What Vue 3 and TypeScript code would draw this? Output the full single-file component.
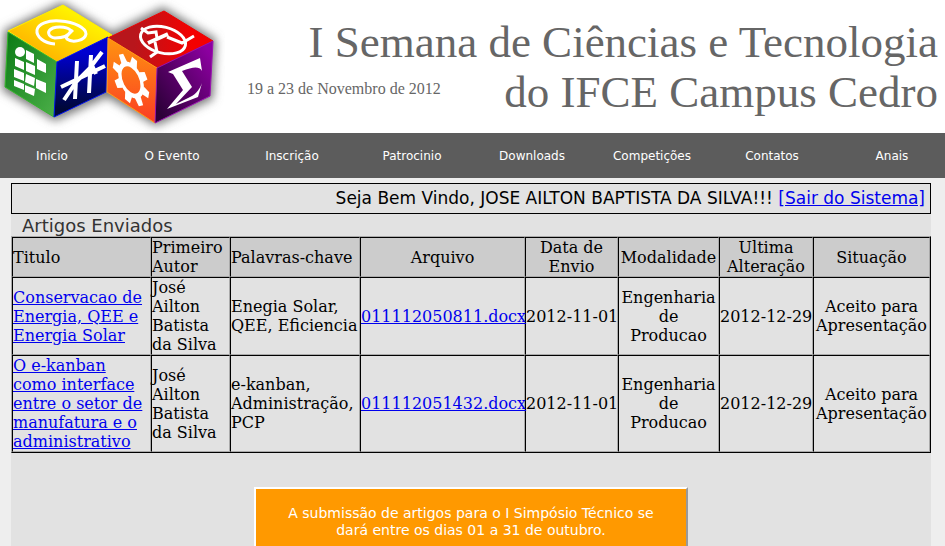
<script setup lang="ts">
interface Article {
  title: string
  author: string
  keywords: string
  file: string
  sent: string
  mode: string
  changed: string
  status: string
}

const menu: string[] = [
  'Inicio',
  'O Evento',
  'Inscrição',
  'Patrocinio',
  'Downloads',
  'Competições',
  'Contatos',
  'Anais',
]

const articles: Article[] = [
  {
    title: 'Conservacao de Energia, QEE e Energia Solar',
    author: 'José Ailton Batista da Silva',
    keywords: 'Enegia Solar, QEE, Eficiencia',
    file: '011112050811.docx',
    sent: '2012-11-01',
    mode: 'Engenharia de Producao',
    changed: '2012-12-29',
    status: 'Aceito para Apresentação',
  },
  {
    title: 'O e-kanban como interface entre o setor de manufatura e o administrativo',
    author: 'José Ailton Batista da Silva',
    keywords: 'e-kanban, Administração, PCP',
    file: '011112051432.docx',
    sent: '2012-11-01',
    mode: 'Engenharia de Producao',
    changed: '2012-12-29',
    status: 'Aceito para Apresentação',
  },
]

const gearTeeth: number[] = [10, 55, 100, 145, 190, 235, 280, 325]
</script>

<template>
  <header class="banner">
    <svg class="logo" viewBox="0 0 225 133" aria-hidden="true">
      <defs>
        <filter id="soft" x="-20%" y="-20%" width="140%" height="140%">
          <feGaussianBlur stdDeviation="5" />
        </filter>
        <linearGradient id="yellow" x1="0" y1="1" x2="1" y2="0">
          <stop offset="0.2" stop-color="#ffb400" />
          <stop offset="0.75" stop-color="#fff200" />
        </linearGradient>
        <linearGradient id="green" x1="0" y1="0" x2="1" y2="1">
          <stop offset="0" stop-color="#0a7a14" />
          <stop offset="1" stop-color="#4db04a" />
        </linearGradient>
        <linearGradient id="blue" x1="0" y1="0" x2="0" y2="1">
          <stop offset="0.2" stop-color="#0000d0" />
          <stop offset="0.9" stop-color="#000838" />
        </linearGradient>
        <linearGradient id="red" x1="0" y1="0" x2="1" y2="0">
          <stop offset="0.25" stop-color="#b8161c" />
          <stop offset="0.8" stop-color="#f40000" />
        </linearGradient>
        <linearGradient id="orange" x1="0" y1="0" x2="0" y2="1">
          <stop offset="0" stop-color="#ff9410" />
          <stop offset="1" stop-color="#fb3c24" />
        </linearGradient>
        <linearGradient id="purple" x1="0" y1="1" x2="1" y2="0">
          <stop offset="0.1" stop-color="#2c0038" />
          <stop offset="0.9" stop-color="#8c00a0" />
        </linearGradient>
      </defs>
      <path class="shade" d="M62 2 112 32 163 7 216 39 213 99 156 126 107 97 55 121 2 90 4 30Z" />
      <path fill="url(#yellow)" stroke="#fff000" d="M63 5 112 35 57 62 8 31Z" />
      <path fill="url(#green)" stroke="#35b52c" d="M8 32 57 62 54 117 5 87Z" />
      <path fill="url(#blue)" stroke="#0010f0" d="M57 62 108 37 106 92 54 117Z" />
      <path fill="url(#red)" stroke="#f00000" d="M164 11 213 41 157 68 108 38Z" />
      <path fill="url(#orange)" stroke="#ffa018" d="M108 38 157 68 155 123 107 92Z" />
      <path fill="url(#purple)" stroke="#9a10b0" d="M157 68 213 41 210 96 155 123Z" />
      <g class="line">
        <path d="M55 44C44 43 36 37 37 30 38 24 48 20 60 21 75 22 86 28 86 34 85 41 72 43 67 39 65 37 69 34 73 30M71 31C69 27 59 26 53 28 46 31 48 37 55 38 63 38 69 35 71 31" />
      </g>
      <g class="fill">
        <ellipse cx="20" cy="52" rx="5" ry="5" />
        <path d="M26 50 34 54 34 63 26 59ZM37 59 46 64 46 73 37 69ZM15 58 24 62 24 70 15 66ZM26 62 35 66 35 75 26 71ZM14 69 24 73 24 81 14 77ZM26 74 35 78 34 86 25 82ZM36 79 46 83 46 93 36 88ZM14 80 24 84 24 90 14 86ZM25 85 35 89 34 96 25 92Z" />
      </g>
      <g class="line bold">
        <path d="M77 61 75 99M91 55 89 93M102 52 90 68 76 82 64 100M61 87 82 77 105 66M91 63 96 74" />
      </g>
      <g class="line">
        <ellipse cx="163" cy="40" rx="23" ry="13" transform="rotate(14 163 40)" />
        <path d="M141 28 148 33 156 32 157 38M194 36 182 43 167 37M150 57 157 52 155 42" />
        <path class="bold" d="M148 43 168 34" />
      </g>
      <g class="fill" transform="matrix(.86 .54 -.02 1.12 131 80)">
        <path fill-rule="evenodd" d="M0-15A15 15 0 1 1 0 15 15 15 0 1 1 0-15M0-11A11 11 0 1 0 0 11 11 11 0 1 0 0-11" />
        <path v-for="angle in gearTeeth" :key="angle" d="M-4-14-3-21H3L4-14Z" :transform="`rotate(${angle})`" />
      </g>
      <path class="fill" d="M168 72 200 58 202 71C199 66 193 67 182 71L192 87 176 104 190 97C197 94 200 88 202 83L198 97 167 109 183 90 173 74Z" />
    </svg>
    <p class="dates">19 a 23 de Novembro de 2012</p>
    <h1 class="title">I Semana de Ciências e Tecnologia<br />do IFCE Campus Cedro</h1>
  </header>

  <nav class="menu">
    <ul class="menu-list">
      <li v-for="item in menu" :key="item"><a href="#">{{ item }}</a></li>
    </ul>
  </nav>

  <main class="content">
    <p class="welcome">
      Seja Bem Vindo, JOSE AILTON BAPTISTA DA SILVA!!! <a href="#">[Sair do Sistema]</a>
    </p>
    <h2 class="heading">Artigos Enviados</h2>
    <table class="articles">
      <colgroup>
        <col class="c-title" /><col class="c-author" /><col class="c-keys" /><col class="c-file" />
        <col class="c-sent" /><col class="c-mode" /><col class="c-changed" /><col class="c-status" />
      </colgroup>
      <thead>
        <tr>
          <th class="start">Titulo</th>
          <th class="start">Primeiro Autor</th>
          <th class="start">Palavras-chave</th>
          <th>Arquivo</th>
          <th>Data de Envio</th>
          <th>Modalidade</th>
          <th>Ultima Alteração</th>
          <th>Situação</th>
        </tr>
      </thead>
      <tbody>
        <tr v-for="article in articles" :key="article.file">
          <td class="start"><a href="#">{{ article.title }}</a></td>
          <td class="start">{{ article.author }}</td>
          <td class="start">{{ article.keywords }}</td>
          <td><a href="#">{{ article.file }}</a></td>
          <td class="date">{{ article.sent }}</td>
          <td>{{ article.mode }}</td>
          <td class="date">{{ article.changed }}</td>
          <td>{{ article.status }}</td>
        </tr>
      </tbody>
    </table>
    <p class="notice">A submissão de artigos para o I Simpósio Técnico se dará entre os dias 01 a 31 de outubro.</p>
  </main>
</template>

<style>
body {
  background: #eee;
}

html,
body {
  overflow: hidden;
}
</style>

<style scoped>
.banner {
  display: flex;
  align-items: flex-start;
  box-sizing: border-box;
  padding-right: 7px;
  background: #fff;
  color: #666;
  font-family: Georgia, "Liberation Serif", serif;
}

.logo {
  flex: none;
  width: 225px;
  height: 133px;
}

.shade {
  fill: #777;
  filter: url(#soft);
}

.line {
  fill: none;
  stroke: #fff;
  stroke-width: 3;
}

.bold {
  stroke-width: 4;
}

.fill {
  fill: #fff;
}

.dates {
  margin: 80px 0 0 22px;
  font-size: 16px;
  line-height: 18px;
  white-space: nowrap;
}

.title {
  flex: 1;
  margin: 17px 0 0 -200px;
  font-size: 45px;
  font-weight: 400;
  line-height: 50px;
  text-align: right;
  white-space: nowrap;
}

.menu {
  overflow: hidden;
  background: #5c5c5c;
}

.menu-list {
  display: grid;
  grid-template-columns: repeat(8, 1fr);
  margin: 0 -7px 0 -8px;
  padding: 0;
  list-style: none;
  text-align: center;
}

.menu-list a {
  display: block;
  padding: 2px 0 1px;
  color: #fff;
  font-family: Verdana, "DejaVu Sans", sans-serif;
  font-size: 12px;
  line-height: 42px;
  text-decoration: none;
}

a {
  color: #00e;
}

.content {
  min-height: 363px;
  margin: 0 14px 0 11px;
  background: linear-gradient(#eee 5px, #e2e2e2 5px);
  padding-top: 5px;
  font-family: Verdana, "DejaVu Sans", sans-serif;
}

.welcome {
  margin: 0;
  padding: 5px;
  border: 1px solid #000;
  color: #000;
  font-size: 17px;
  line-height: 19px;
  text-align: right;
}

.heading {
  margin: 0;
  padding: 1px 11px 0;
  color: #333;
  font-size: 18px;
  font-weight: 400;
  line-height: 21px;
}

.articles {
  width: 100%;
  table-layout: fixed;
  border: 1px solid;
  border-color: #aaa #000 #000 #aaa;
  border-spacing: 0;
  color: #000;
  font-family: "DejaVu Serif", serif;
  font-size: 16px;
  line-height: 19px;
}

.articles th,
.articles td {
  padding: 0;
  border: 1px solid;
  border-color: #000 #aaa #aaa #000;
  font-weight: 400;
  text-align: center;
}

.articles th {
  background: #ccc;
}

.articles .start {
  text-align: left;
}

.articles .date {
  white-space: nowrap;
}

.c-title {
  width: 139px;
}

.c-author {
  width: 79px;
}

.c-keys {
  width: 130px;
}

.c-file {
  width: 165px;
}

.c-sent {
  width: 93px;
}

.c-mode {
  width: 101px;
}

.c-changed {
  width: 94px;
}

.notice {
  box-sizing: border-box;
  max-width: 434px;
  margin: 34px auto 0;
  padding: 16px 20px;
  border: 2px solid;
  border-color: #fff #999 #999 #fff;
  background: #f90;
  color: #fff;
  font-size: 14px;
  line-height: 17px;
  text-align: center;
}
</style>
